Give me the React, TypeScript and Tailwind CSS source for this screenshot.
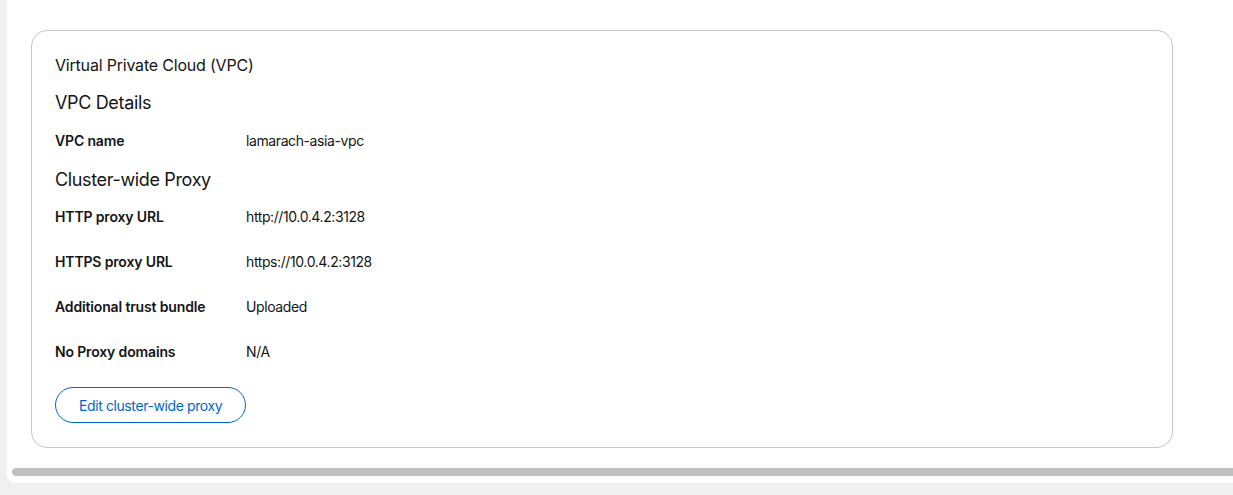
import React from "react";

const rows = [
  { label: "HTTP proxy URL", value: "http://10.0.4.2:3128" },
  { label: "HTTPS proxy URL", value: "https://10.0.4.2:3128" },
  { label: "Additional trust bundle", value: "Uploaded" },
  { label: "No Proxy domains", value: "N/A" },
];

const font = { fontFamily: "Inter, 'Noto Sans', sans-serif" };

const App: React.FC = () => {
  return (
    <div
      className="h-[495px] w-full bg-[#f0f0f0] pl-[7px] pb-[12px] text-[#151515]"
      style={font}
    >
      <div className="flex h-[483px] flex-col rounded-bl-lg bg-white">
        <div className="pl-[24px] pt-[30px]">
          <div className="w-[1142px] rounded-2xl border border-[#c7c7c7] pl-[23px] pt-[22px] pb-[24px]">
            <h2 className="text-[16px] leading-[24px] tracking-[-0.2px]">Virtual Private Cloud (VPC)</h2>
            <h3 className="mt-[12px] text-[18px] leading-[27px] tracking-[-0.35px]">VPC Details</h3>
            <div className="mt-[14px] flex text-[14px] leading-[21px]">
              <div className="w-[191px] font-semibold tracking-[-0.15px]">VPC name</div>
              <div className="tracking-[-0.4px]">lamarach-asia-vpc</div>
            </div>
            <h3 className="mt-[15px] text-[18px] leading-[27px] tracking-[-0.35px]">Cluster-wide Proxy</h3>
            <div className="mt-[13px] grid grid-cols-[191px_1fr] gap-y-[24px] text-[14px] leading-[21px]">
              {rows.map((r) => (
                <React.Fragment key={r.label}>
                  <div className="font-semibold tracking-[-0.15px]">{r.label}</div>
                  <div className="tracking-[-0.4px]">{r.value}</div>
                </React.Fragment>
              ))}
            </div>
            <button className="mt-[25px] h-[36px] rounded-full border border-[#0066cc] px-[23px] text-[14px] tracking-[-0.4px] text-[#0066cc]">
              Edit cluster-wide proxy
            </button>
          </div>
        </div>
        <div className="mt-auto mb-[7px] ml-[5px] h-[8px] rounded-l-full bg-[#c0c0c0]" />
      </div>
    </div>
  );
};

export default App;
